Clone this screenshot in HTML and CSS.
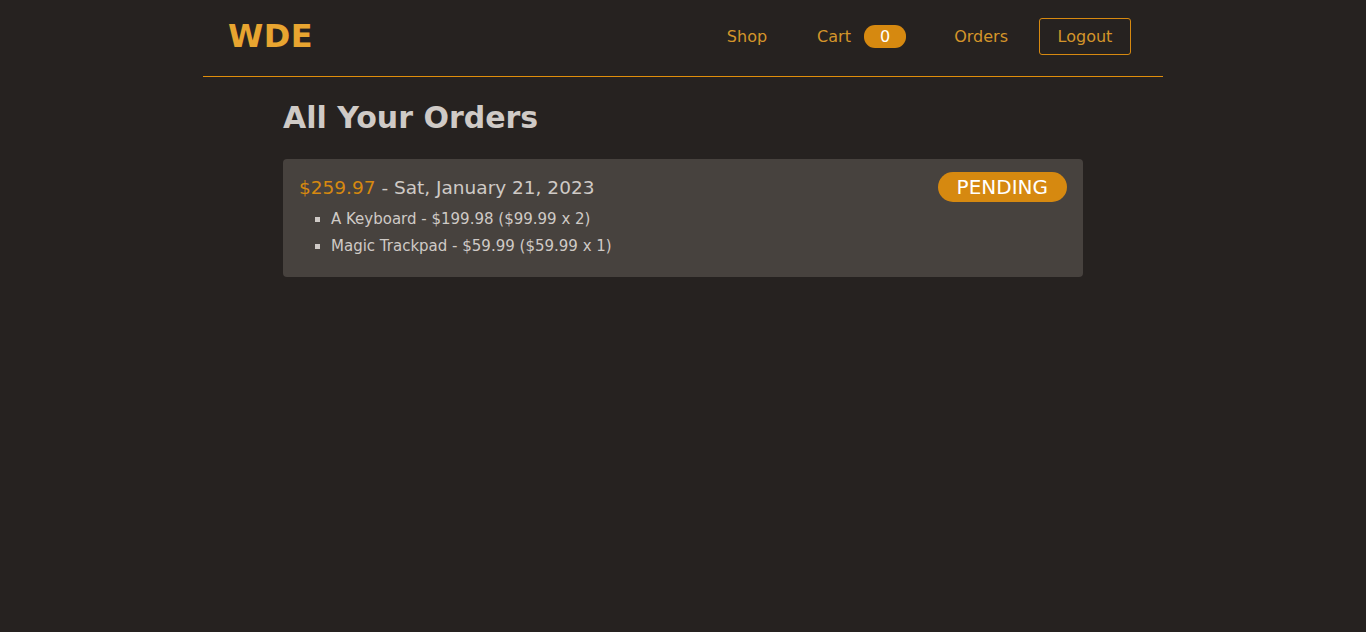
FILE: index.html
```html
<!DOCTYPE html>
<html lang="en">
<head>
    <meta charset="UTF-8">
    <meta name="viewport" content="width=device-width, initial-scale=1.0">
    <title>WDE - Orders</title>
    <link rel="stylesheet" href="styles.css">
</head>
<body>
    <header class="navbar">
        <a class="brand" href="#">WDE</a>
        <nav class="nav-links">
            <a href="#" class="shop">Shop</a>
            <a href="#">Cart <span class="badge">0</span></a>
            <a href="#">Orders</a>
            <button class="logout">Logout</button>
        </nav>
    </header>

    <main class="orders">
        <h1>All Your Orders</h1>
        <div class="order">
            <div class="order-head">
                <h2><span class="total">$259.97</span> - Sat, January 21, 2023</h2>
                <span class="status">PENDING</span>
            </div>
            <ul class="items">
                <li>A Keyboard - $199.98 ($99.99 x 2)</li>
                <li>Magic Trackpad - $59.99 ($59.99 x 1)</li>
            </ul>
        </div>
    </main>
</body>
</html>
```

FILE: styles.css
```css
body {
    margin: 0;
    background: #262220;
    color: #cfcac6;
    font-family: "DejaVu Sans", sans-serif;
}
a {
    text-decoration: none;
}
.navbar {
    width: 960px;
    height: 77px;
    margin: 0 auto;
    box-sizing: border-box;
    padding: 0 32px 4px 25px;
    display: flex;
    align-items: center;
    justify-content: space-between;
    border-bottom: 1px solid #e08e0b;
}
.brand {
    color: #e8a530;
    font-size: 32px;
    font-weight: bold;
    letter-spacing: 0.5px;
}
.nav-links {
    display: flex;
    align-items: center;
}
.nav-links a {
    color: #d4952a;
    font-size: 16px;
    margin-right: 48px;
}
.nav-links .shop {
    margin-right: 50px;
}
.nav-links a:last-of-type {
    margin-right: 31px;
}
.badge {
    display: inline-block;
    background: #d68910;
    color: #fff;
    border-radius: 11px;
    padding: 2px 16px;
    margin-left: 8px;
    font-size: 16px;
}
.logout {
    background: none;
    color: #d4952a;
    border: 1px solid #d68910;
    border-radius: 3px;
    font-family: inherit;
    font-size: 16px;
    width: 92px;
    height: 37px;
}
.orders {
    width: 800px;
    margin: 0 auto;
    padding-top: 23px;
}
.orders h1 {
    margin: 0 0 24px;
    font-size: 30px;
    font-weight: bold;
    color: #cfcac6;
}
.order {
    background: #47423e;
    border-radius: 4px;
    padding: 13px 16px 17px;
}
.order-head {
    display: flex;
    justify-content: space-between;
    align-items: center;
}
.order-head h2 {
    margin: 0;
    font-size: 18.5px;
    font-weight: normal;
}
.total {
    color: #d68910;
}
.status {
    background: #d68910;
    color: #fff;
    border-radius: 15px;
    padding: 3px 19px;
    font-size: 20px;
}
.items {
    margin: 4px 0 0;
    padding-left: 32px;
    list-style: square;
    font-size: 15px;
    line-height: 27px;
}
```
